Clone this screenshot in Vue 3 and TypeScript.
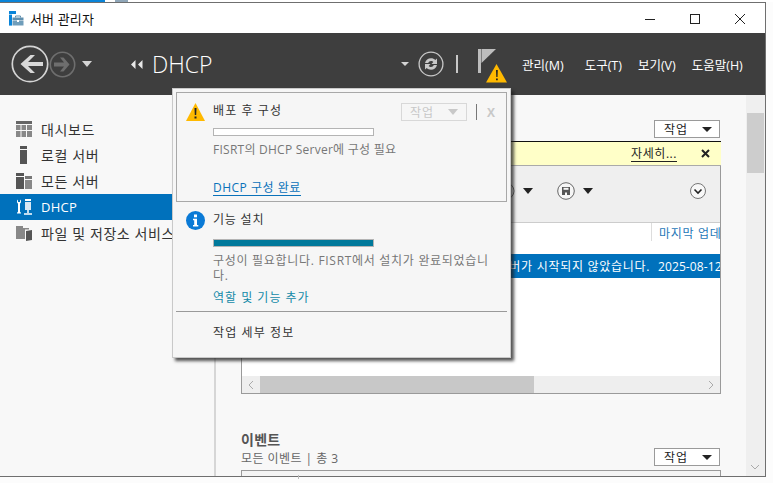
<script setup lang="ts">
const menus: string[] = ['관리(M)', '도구(T)', '보기(V)', '도움말(H)']
</script>

<template>
  <div class="screen">
    <div class="strip">
      <span class="strip-blue"></span>
      <span class="strip-icon"></span>
      <span class="strip-text">DHCP 설치 후 구성 마법사</span>
    </div>
    <div class="row-outer">
      <div class="window">
        <header class="titlebar">
          <svg class="app-icon" width="15" height="15" viewBox="0 0 15 15">
            <rect x="0" y="0" width="7" height="3" fill="#0a84d8" />
            <rect x="0" y="3.600" width="3" height="11" fill="#0a84d8" />
            <path d="M3.500 6.500h11v3h-11z" fill="#5f8fae" />
            <path d="M3.500 10h11v4.500h-11z" fill="#6f9dba" />
            <path d="M6.500 6.500v-1.500h5v1.500" fill="none" stroke="#5f8fae" />
            <rect x="8" y="9" width="2" height="2" fill="#fff" />
          </svg>
          <span class="app-title">서버 관리자</span>
          <div class="win-buttons">
            <svg width="12" height="12" viewBox="0 0 12 12"><path d="M1 6.500h10" stroke="#222" /></svg>
            <svg width="12" height="12" viewBox="0 0 12 12"><rect x="1.500" y="1.500" width="9" height="9" fill="none" stroke="#222" /></svg>
            <svg width="12" height="12" viewBox="0 0 12 12"><path d="M1 1l10 10M11 1L1 11" stroke="#222" /></svg>
          </div>
        </header>

        <div class="darkbar">
          <svg class="nav-back" width="38" height="38" viewBox="0 0 38 38">
            <circle cx="19" cy="19" r="17.700" fill="none" stroke="#d4d4d4" stroke-width="1.700" />
            <path d="M32 17H17l7-7h-4.500L9.500 19l10 9H24l-7-7h15z" fill="#d8d8d8" />
          </svg>
          <svg class="nav-fwd" width="27" height="27" viewBox="0 0 27 27">
            <circle cx="13.500" cy="13.500" r="12.200" fill="none" stroke="#6e6e6e" stroke-width="1.600" />
            <path d="M5 11.500h10l-4-5h3.500l6 7-6 7H11l4-5H5z" fill="#6e6e6e" />
          </svg>
          <span class="tri-down white small-tri"></span>
          <span class="crumb-arrows">
            <svg width="12" height="9" viewBox="0 0 12 9"><path d="M4.500 0v9L0 4.500zM11.500 0v9L7 4.500z" fill="#e8e8e8" /></svg>
          </span>
          <span class="crumb">DHCP</span>
          <span class="tri-down white mini-tri"></span>
          <svg class="refresh" width="26" height="26" viewBox="0 0 26 26">
            <circle cx="13" cy="13" r="11.900" fill="none" stroke="#c8c8c8" stroke-width="1.300" />
            <path d="M7 12c.8-3.200 3-4.800 6-4.800 1.800 0 3.200.6 4.300 1.700L19 7.500V13h-5.500l1.800-1.900c-.6-.8-1.300-1.100-2.300-1.100-1.300 0-2.300.7-2.800 2z" fill="#c8c8c8" />
            <path d="M19 14c-.8 3.200-3 4.800-6 4.800-1.800 0-3.200-.6-4.300-1.700L7 18.500V13h5.500l-1.800 1.900c.6.800 1.300 1.100 2.300 1.100 1.300 0 2.300-.7 2.800-2z" fill="#c8c8c8" />
          </svg>
          <span class="sep"></span>
          <div class="flag">
            <svg width="30" height="36" viewBox="0 0 30 36">
              <rect x="0" y="0" width="3" height="24" fill="#bdbdbd" />
              <path d="M3.500 0H18L3.500 14z" fill="#bdbdbd" />
              <path d="M18.500 15L29 33.500H8z" fill="#ffb900" />
              <path d="M18 21h1.800l-.3 7h-1.200z M18 29.500h1.800v1.800H18z" fill="#222" />
            </svg>
          </div>
          <nav class="menus">
            <span v-for="m in menus" :key="m" class="menu">{{ m }}</span>
          </nav>
        </div>

        <div class="body">
          <aside class="side">
            <div class="side-item">
              <svg width="16" height="16" viewBox="0 0 16 16">
                <rect x="0" y="0" width="16" height="3" fill="#666" />
                <path d="M0 4h16v12H0z" fill="#888" />
                <path d="M5 4v12M10.500 4v12M0 9.500h16" stroke="#f8f8f8" />
              </svg>
              <span>대시보드</span>
            </div>
            <div class="side-item">
              <svg width="16" height="18" viewBox="0 0 16 18">
                <rect x="4" y="0" width="7" height="3" fill="#555" />
                <rect x="4" y="4" width="7" height="14" fill="#555" />
              </svg>
              <span>로컬 서버</span>
            </div>
            <div class="side-item">
              <svg width="16" height="16" viewBox="0 0 16 16">
                <rect x="0" y="0" width="8" height="3" fill="#555" />
                <rect x="0" y="4" width="8" height="12" fill="#555" />
                <rect x="9" y="3" width="7" height="3" fill="#777" />
                <rect x="9" y="7" width="7" height="9" fill="#888" />
              </svg>
              <span>모든 서버</span>
            </div>
            <div class="side-item active">
              <svg width="16" height="16" viewBox="0 0 16 16">
                <path d="M1 2.500C1 1.500 1.500 1 2 .5v2.500h2V.5c.6.500 1 1 1 2 0 1-.4 1.600-1 2v8.200c.8.500 1 1 1 1.800H1c0-.8.2-1.300 1-1.800V4.500c-.6-.4-1-1-1-2z" fill="#fff" />
                <rect x="9" y="0" width="6" height="2" fill="#fff" />
                <rect x="9" y="3" width="6" height="8" fill="#d8e8f4" />
                <path d="M12 11v3M8 15h8" stroke="#fff" stroke-width="1.500" />
              </svg>
              <span>DHCP</span>
            </div>
            <div class="side-item">
              <svg width="16" height="16" viewBox="0 0 16 16">
                <path d="M0 1h7v2h6v1.500H9V14H0z" fill="#888" />
                <path d="M10 6l6-1v10l-6 1z" fill="#555" />
              </svg>
              <span class="side-long">파일 및 저장소 서비스</span>
            </div>
          </aside>

          <main class="main">
            <div class="content">
              <div class="action-line first-line">
                <button class="action">작업<span class="tri-down"></span></button>
              </div>
              <section class="panel">
                <div class="notice">
                  <a class="more">자세히...</a>
                  <svg class="close-x" width="9" height="9" viewBox="0 0 9 9"><path d="M1 1l7 7M8 1L1 8" stroke="#222" stroke-width="2" /></svg>
                </div>
                <div class="toolbar">
                  <svg class="tool-a" width="18" height="18" viewBox="0 0 18 18"><circle cx="9" cy="9" r="8" fill="#f6f6f6" stroke="#666" /></svg>
                  <span class="tri-down tool-tri"></span>
                  <svg class="tool-save" width="18" height="18" viewBox="0 0 18 18">
                    <circle cx="9" cy="9" r="8.300" fill="#f6f6f6" stroke="#666" />
                    <path d="M5 5h8v8H5z" fill="#555" />
                    <rect x="6.500" y="5.800" width="5" height="2" fill="#f6f6f6" />
                    <rect x="8" y="10.500" width="2" height="2.500" fill="#f6f6f6" />
                  </svg>
                  <span class="tri-down tool-tri"></span>
                  <svg class="tool-exp" width="16" height="16" viewBox="0 0 16 16">
                    <circle cx="8" cy="8" r="7.500" fill="#f8f8f8" stroke="#777" />
                    <path d="M4.500 6.500L8 10l3.500-3.500" fill="none" stroke="#222" stroke-width="1.600" />
                  </svg>
                </div>
                <div class="thead">
                  <span class="th-cell">마지막 업데이트</span>
                </div>
                <div class="tr-sel">
                  <div class="td-msg"><span>FISRT DHCP 서버가 시작되지 않았습니다.</span></div>
                  <span class="td-date">2025-08-12 오전</span>
                </div>
                <div class="tbody-fill"></div>
                <div class="hscroll">
                  <span class="hs-btn">
                    <svg width="6" height="10" viewBox="0 0 6 10"><path d="M5 1L1 5l4 4" fill="none" stroke="#aaa" /></svg>
                  </span>
                  <span class="hs-thumb"></span>
                  <span class="hs-rest"></span>
                  <span class="hs-btn">
                    <svg width="6" height="10" viewBox="0 0 6 10"><path d="M1 1l4 4-4 4" fill="none" stroke="#aaa" /></svg>
                  </span>
                </div>
              </section>

              <div class="events">
                <div class="events-head">
                  <div class="events-title">이벤트</div>
                  <div class="events-sub">모든 이벤트 | 총 3</div>
                </div>
                <button class="action">작업<span class="tri-down"></span></button>
              </div>
              <div class="panel-next"></div>
            </div>

            <div class="vscroll">
              <span class="vs-thumb"></span>
              <svg class="vs-down" width="10" height="6" viewBox="0 0 10 6"><path d="M1 1l4 4 4-4" fill="none" stroke="#aaa" /></svg>
            </div>
          </main>
        </div>

        <div class="popup">
          <div class="pop-box">
            <svg class="pop-ic warn" width="19" height="18" viewBox="0 0 19 18">
              <path d="M9.500 0L19 18H0z" fill="#ffb900" />
              <path d="M8.500 5h2l-.3 7H8.800z M8.500 13.500h2v2h-2z" fill="#222" />
            </svg>
            <div class="pop-main">
              <div class="pop-title-row">
                <span class="pop-title first">배포 후 구성</span>
                <span class="pop-btn">작업<span class="tri-down pale"></span></span>
                <span class="pop-sep"></span>
                <span class="pop-x">X</span>
              </div>
              <div class="bar"></div>
              <div class="pop-text">FISRT의 DHCP Server에 구성 필요</div>
              <a class="pop-link blue">DHCP 구성 완료</a>
            </div>
          </div>

          <div class="pop-install">
            <svg class="pop-ic" width="19" height="19" viewBox="0 0 19 19">
              <circle cx="9.500" cy="9.500" r="9.500" fill="#0a7ad6" />
              <rect x="8" y="3.500" width="3" height="2.800" fill="#fff" />
              <path d="M7 7.800h4v6.200h1.300v1.500H7V14h1.200V9.300H7z" fill="#fff" />
            </svg>
            <div class="pop-main">
              <div class="pop-title second">기능 설치</div>
              <div class="bar filled"></div>
              <div class="pop-text wrap">구성이 필요합니다. FISRT에서 설치가 완료되었습니다.</div>
              <a class="pop-link teal">역할 및 기능 추가</a>
            </div>
          </div>

          <div class="pop-hr"></div>
          <div class="pop-details">작업 세부 정보</div>
        </div>
      </div>
      <div class="right-gap"></div>
    </div>
    <div class="bottom-gap"><span class="tick"></span></div>
  </div>
</template>

<style>
html, body { margin: 0; padding: 0; overflow: hidden; }
</style>

<style scoped>
.screen {
  width: 773px;
  height: 483px;
  display: flex;
  flex-direction: column;
  background: #fcfcfc;
  overflow: hidden;
  font-family: "Open Sans", "Noto Sans CJK KR", sans-serif;
  color: #333;
}
.strip {
  height: 2px;
  flex: none;
  display: flex;
  overflow: hidden;
  background: #fff;
}
.strip-blue { width: 105px; height: 2px; background: #0a84d8; flex: none; }
.strip-icon { width: 13px; height: 2px; margin-left: 10px; background: #8fa6b8; flex: none; }
.strip-text { margin: -17px 0 0 8px; font-size: 13px; line-height: 18px; color: #aaa; letter-spacing: 1.200px; white-space: nowrap; }
.row-outer { flex: 1; min-height: 0; display: flex; }
.window {
  position: relative;
  width: 765px;
  height: 473px;
  flex: none;
  display: flex;
  flex-direction: column;
  border: solid #6f6f6f;
  border-width: 1px 1px 1px 0;
  overflow: hidden;
  background: #f8f8f8;
}
.right-gap { flex: 1; }
.bottom-gap { height: 8px; flex: none; position: relative; }
.tick { position: absolute; left: 298px; top: 0; width: 1px; height: 4px; background: #bbb; }

.titlebar {
  height: 30px;
  flex: none;
  background: #fff;
  display: flex;
  align-items: center;
  padding-left: 9px;
}
.app-icon { margin-right: 6px; margin-top: 1px; }
.app-title { font-size: 13px; color: #111; letter-spacing: 0.150px; margin-top: 1px; }
.win-buttons { margin-left: auto; display: flex; gap: 33px; padding-right: 19px; margin-top: 1px; }

.darkbar {
  height: 62px;
  flex: none;
  background: #3e3e3e;
  display: flex;
  align-items: center;
  padding-left: 11px;
  color: #fff;
}
.nav-back { flex: none; }
.nav-fwd { margin-left: 0; flex: none; }
.tri-down {
  display: inline-block;
  width: 0;
  height: 0;
  border-left: 5px solid transparent;
  border-right: 5px solid transparent;
  border-top: 6px solid #222;
}
.tri-down.white { border-top-color: #d4d4d4; }
.small-tri { margin-left: 6px; }
.crumb-arrows { margin-left: 39px; display: flex; }
.crumb {
  margin-left: 9px;
  font-size: 23px;
  font-weight: 300;
  color: #fff;
  width: 249px;
  flex: none;
}
.mini-tri { border-left-width: 4px; border-right-width: 4px; border-top-width: 4px; }
.refresh { margin-left: 9px; flex: none; }
.sep { width: 2px; height: 18px; background: #c8c8c8; margin-left: 12px; }
.flag { margin-left: 20px; margin-top: 6px; height: 36px; }
.menus { margin-left: 14px; display: flex; color: #fff; }
.menu { font-size: 12.500px; letter-spacing: 0; margin-right: 16px; white-space: nowrap; }
.menu:first-child { margin-right: 21px; }

.body { flex: 1; min-height: 0; display: flex; }
.side {
  width: 216px;
  flex: none;
  border-right: 2px solid #d6d6d6;
  box-sizing: border-box;
  padding-top: 21px;
  background: #f8f8f8;
}
.side-item {
  height: 26px;
  display: flex;
  align-items: center;
  font-size: 14px;
  letter-spacing: 0.600px;
  color: #333;
  padding-left: 16px;
  white-space: nowrap;
  overflow: hidden;
}
.side-item svg { flex: none; margin-right: 9px; }
.side-item.active { background: #0071bc; color: #fff; font-size: 13px; letter-spacing: 0.300px; }

.main { flex: 1; min-width: 0; display: flex; }
.content { flex: 1; min-width: 0; padding: 0 26px 0 25px; overflow: hidden; }
.action-line { display: flex; justify-content: flex-end; }
.first-line { padding-top: 25px; height: 21px; }
.action {
  width: 66px;
  height: 18px;
  box-sizing: border-box;
  border: 1px solid #9a9a9a;
  background: #fff;
  padding: 0 7px 0 9px;
  display: flex;
  align-items: center;
  justify-content: space-between;
  font: 12px "Open Sans", "Noto Sans CJK KR", sans-serif;
  color: #222;
  letter-spacing: 1px;
  flex: none;
}
.action .tri-down { border-left-width: 5px; border-right-width: 5px; border-top-width: 5px; }
.panel {
  width: 480px;
  height: 253px;
  box-sizing: border-box;
  border: solid #9a9a9a;
  border-width: 0 1px 1px 1px;
  display: flex;
  flex-direction: column;
  background: #fff;
}
.notice {
  height: 25px;
  flex: none;
  box-sizing: border-box;
  border-top: 1px solid #111;
  border-bottom: 1px solid #aaa;
  background: #ffffc8;
  margin: 0 -1px;
  display: flex;
  align-items: center;
  justify-content: flex-end;
  padding-right: 11px;
  font-size: 12px;
  color: #222;
}
.more { border-bottom: 1px solid #222; line-height: 15px; letter-spacing: 0.550px; margin-right: 24px; }
.toolbar {
  height: 57px;
  flex: none;
  background: #efefef;
  border-bottom: 1px solid #ccc;
  display: flex;
  align-items: center;
  box-sizing: border-box;
  padding-bottom: 6px;
}
.tool-a { margin-left: 255px; }
.tool-tri { margin-left: 8px; }
.tool-save { margin-left: 24px; }
.tool-exp { margin-left: auto; margin-right: 14px; }
.thead { height: 31px; flex: none; display: flex; justify-content: flex-end; overflow: hidden; }
.th-cell {
  width: 69px;
  box-sizing: border-box;
  height: 18px;
  border-left: 1px solid #ddd;
  padding: 3px 0 0 7px;
  font-size: 12px;
  line-height: 16px;
  letter-spacing: 0.700px;
  color: #1f78b8;
  white-space: nowrap;
  overflow: hidden;
}
.tr-sel {
  height: 24px;
  flex: none;
  background: #0071bc;
  color: #fff;
  display: flex;
  align-items: center;
  font-size: 12px;
  white-space: nowrap;
  overflow: hidden;
}
.td-msg { flex: 1; min-width: 0; display: flex; justify-content: flex-end; padding-right: 8px; overflow: hidden; }
.td-msg span { flex: none; letter-spacing: 0.700px; }
.td-date { width: 62px; flex: none; overflow: hidden; letter-spacing: 0.100px; }
.tbody-fill { flex: 1; }
.hscroll { height: 17px; flex: none; background: #eee; display: flex; align-items: stretch; }
.hs-btn { width: 18px; flex: none; display: flex; align-items: center; justify-content: center; }
.hs-thumb { width: 274px; background: #c8c8c8; flex: none; }
.hs-rest { flex: 1; }
.events { display: flex; justify-content: space-between; align-items: flex-end; margin-top: 37px; }
.events-head { line-height: 18px; }
.events-title { font-size: 14px; font-weight: 700; color: #555; letter-spacing: 0.300px; margin-bottom: 1px; }
.events-sub { font-size: 12px; color: #666; letter-spacing: 0.450px; margin-bottom: -1px; }
.panel-next { margin-top: 3px; width: 480px; height: 20px; box-sizing: border-box; border: 1px solid #9a9a9a; background: #f4f4f4; }
.events .action { margin-bottom: 1px; }

.vscroll {
  width: 19px;
  flex: none;
  background: #efefef;
  box-sizing: border-box;
  padding: 18px 1px 0;
  position: relative;
}
.vs-thumb { display: block; height: 60px; background: #cdcdcd; }
.vs-down { position: absolute; left: 4px; bottom: 6px; }

.popup {
  position: absolute;
  left: 172px;
  top: 85px;
  width: 339px;
  height: 270px;
  box-sizing: border-box;
  padding: 3px 3px 0 3px;
  border: 1px solid #c9c9c9;
  background: #f6f6f6;
  box-shadow: 3px 3px 3px rgba(30, 30, 30, 0.75);
  display: flex;
  flex-direction: column;
}
.pop-box {
  height: 110px;
  flex: none;
  box-sizing: border-box;
  border: 1px solid #a8a8a8;
  padding: 10px 0 0 9px;
  display: flex;
}
.pop-install { display: flex; padding: 9px 0 0 10px; height: 109px; box-sizing: border-box; flex: none; }
.pop-ic { flex: none; }
.pop-ic.warn { margin-right: 8px; }
.pop-install .pop-ic { margin-right: 8px; }
.pop-main { flex: 1; min-width: 0; }
.pop-title-row { display: flex; align-items: center; height: 18px; }
.pop-title { font-size: 12px; color: #333; letter-spacing: 0.800px; }
.pop-title.first { margin-top: -5px; letter-spacing: 1.100px; }
.pop-title.second { line-height: 18px; }
.pop-btn {
  margin-left: auto;
  width: 66px;
  height: 18px;
  box-sizing: border-box;
  border: 1px solid #d8d8d8;
  display: flex;
  align-items: center;
  justify-content: space-between;
  padding: 0 8px;
  font-size: 12px;
  letter-spacing: 1px;
  color: #c8c8c8;
}
.tri-down.pale { border-top-color: #c8c8c8; }
.pop-sep { width: 1px; height: 16px; background: #777; margin-left: 9px; }
.pop-x { margin: 0 11px 0 10px; font-size: 12px; font-weight: 700; color: #c8c8c8; }
.bar {
  width: 161px;
  height: 8px;
  box-sizing: border-box;
  border: 1px solid #b4b4b4;
  background: #fff;
  margin-top: 7px;
}
.bar.filled { background: #00799b; margin-top: 10px; }
.pop-text { font-size: 12px; color: #777; line-height: 15px; margin-top: 6px; letter-spacing: 0.250px; }
.pop-text.wrap { width: 284px; margin-top: 6px; word-break: break-all; letter-spacing: 0.700px; }
.pop-link { display: inline-block; font-size: 12px; letter-spacing: 0.500px; }
.pop-link.blue { color: #0a72ba; margin-top: 24px; border-bottom: 1px solid #0a72ba; line-height: 14px; }
.pop-link.teal { color: #138aa8; margin-top: 7px; line-height: 16px; letter-spacing: 1px; }
.pop-hr { height: 1px; background: #9a9a9a; flex: none; }
.pop-details { font-size: 12px; color: #333; padding: 13px 0 0 37px; letter-spacing: 1.100px; line-height: 16px; }
</style>
